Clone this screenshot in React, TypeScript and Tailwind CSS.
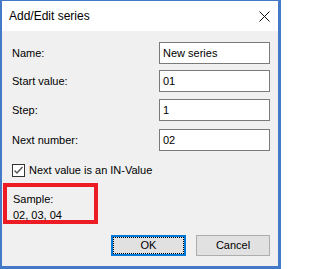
import React from 'react'

const font = { fontFamily: '"Liberation Sans", Arial, sans-serif' }

function Field({ label, value, mt }: { label: string; value: string; mt: string }) {
  return (
    <div className={`flex items-center ${mt}`}>
      <span className="w-[147px] text-[11px] text-black leading-none">{label}</span>
      <div className="w-[111px] h-[22px] border border-[#7a7a7a] bg-white flex items-center pl-[3px] text-[11px] text-black leading-none">
        {value}
      </div>
    </div>
  )
}

export default function App() {
  return (
    <div className="w-[281px] h-[269px] bg-[#f0f0f0] border-solid border-[#4479c8] border-t-[1px] border-l-[2px] border-r-[3px] border-b-[3px] flex flex-col" style={font}>
      <div className="h-[30px] bg-white flex items-center justify-between pl-[7px] pr-[8px]">
        <span className="text-[12px] text-black">Add/Edit series</span>
        <svg width="11" height="11" viewBox="0 0 11 11" className="block">
          <path d="M0.5 0.5L10.5 10.5M10.5 0.5L0.5 10.5" stroke="#111" strokeWidth="1" />
        </svg>
      </div>

      <div className="flex flex-col pl-[10px] pr-[8px] pt-[11px]">
        <Field label="Name:" value="New series" mt="mt-0" />
        <Field label="Start value:" value="01" mt="mt-[6px]" />
        <Field label="Step:" value="1" mt="mt-[7px]" />
        <Field label="Next number:" value="02" mt="mt-[8px]" />

        <div className="flex items-center mt-[13px] h-[13px]">
          <div className="w-[13px] h-[13px] border border-[#333] bg-white flex items-center justify-center">
            <svg width="11" height="11" viewBox="0 0 11 11" className="block">
              <path d="M1.5 5.5L4 8L9.5 2" fill="none" stroke="#555" strokeWidth="1.4" />
            </svg>
          </div>
          <span className="ml-[4px] text-[11px] text-black leading-none">Next value is an IN-Value</span>
        </div>
      </div>

      <div className="ml-[1px] mt-[6px] w-[95px] h-[41px] border-[4px] border-[#ed1c24] flex flex-col pl-[6px] pt-[4px] text-[11px] text-black leading-[16px]">
        <span>Sample:</span>
        <span>02, 03, 04</span>
      </div>

      <div className="flex justify-end gap-[10px] pr-[8px] mt-[11px]">
        <button className="w-[75px] h-[21px] border-2 border-[#0078d7] bg-[#e1e1e1] p-0 flex">
          <span className="flex-1 border border-dotted border-black flex items-center justify-center text-[11px] text-black leading-none">OK</span>
        </button>
        <button className="w-[74px] h-[21px] border border-[#adadad] bg-[#e1e1e1] flex items-center justify-center text-[11px] text-black leading-none">
          Cancel
        </button>
      </div>
    </div>
  )
}
